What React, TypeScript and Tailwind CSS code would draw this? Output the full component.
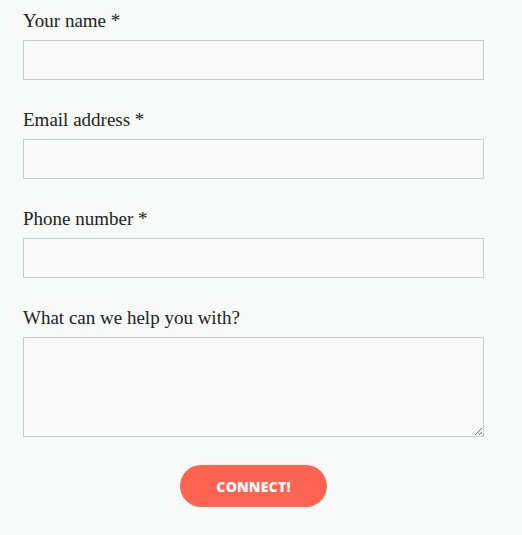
export default function App() {
  const fields = [
    { label: 'Your name *', type: 'text' },
    { label: 'Email address *', type: 'email' },
    { label: 'Phone number *', type: 'tel' },
  ];

  return (
    <div className="min-h-[535px] w-full bg-[#f8f9f9]">
      <form className="w-[461px] ml-[23px] pt-[9px] flex flex-col">
        {fields.map((f) => (
          <div key={f.label} className="flex flex-col mb-[28px]">
            <label className="text-[19px] leading-[24px] text-[#222] mb-[7px] font-['Liberation_Serif',serif]">
              {f.label}
            </label>
            <input
              type={f.type}
              className="h-[40px] w-full bg-[#fafafa] border border-[#cccccc] outline-none"
            />
          </div>
        ))}
        <div className="flex flex-col">
          <label className="text-[19px] leading-[24px] text-[#222] mb-[7px] font-['Liberation_Serif',serif]">
            What can we help you with?
          </label>
          <textarea className="h-[100px] w-full bg-[#fafafa] border border-[#cccccc] outline-none block" />
        </div>
        <div className="flex justify-center mt-[28px]">
          <button
            type="button"
            className="w-[147px] h-[42px] rounded-full bg-[#ff6452] text-white text-[14px] font-extrabold tracking-[0.2px] font-['Open_Sans',sans-serif]"
          >
            CONNECT!
          </button>
        </div>
      </form>
    </div>
  );
}
